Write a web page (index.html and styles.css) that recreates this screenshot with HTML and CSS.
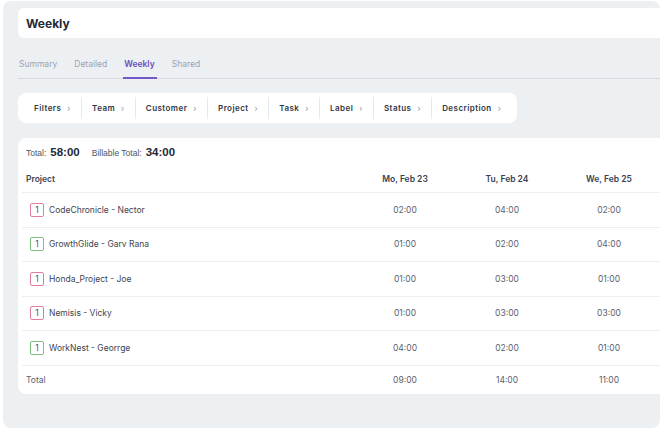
FILE: index.html
```html
<!DOCTYPE html>
<html lang="en">
<head>
  <meta charset="UTF-8">
  <meta name="viewport" content="width=device-width, initial-scale=1.0">
  <title>Weekly Report</title>
  <link rel="stylesheet" href="styles.css">
</head>
<body>
  <div class="panel">
    <div class="title-card">Weekly</div>

    <div class="tabs">
      <span class="tab">Summary</span>
      <span class="tab">Detailed</span>
      <span class="tab active">Weekly</span>
      <span class="tab">Shared</span>
    </div>

    <div class="filters">
      <span class="filter">Filters <i>›</i></span>
      <span class="filter">Team <i>›</i></span>
      <span class="filter">Customer <i>›</i></span>
      <span class="filter">Project <i>›</i></span>
      <span class="filter">Task <i>›</i></span>
      <span class="filter">Label <i>›</i></span>
      <span class="filter">Status <i>›</i></span>
      <span class="filter">Description <i>›</i></span>
    </div>

    <div class="report">
      <div class="totals">
        <span class="total-label">Total:</span>
        <span class="total-value">58:00</span>
        <span class="total-label billable">Billable Total:</span>
        <span class="total-value">34:00</span>
      </div>

      <div class="grid">
        <div class="row head">
          <div class="cell name">Project</div>
          <div class="cell">Mo, Feb 23</div>
          <div class="cell">Tu, Feb 24</div>
          <div class="cell">We, Feb 25</div>
        </div>
        <div class="row">
          <div class="cell name"><span class="badge pink">1</span>CodeChronicle - Nector</div>
          <div class="cell">02:00</div>
          <div class="cell">04:00</div>
          <div class="cell">02:00</div>
        </div>
        <div class="row">
          <div class="cell name"><span class="badge green">1</span>GrowthGlide - Garv Rana</div>
          <div class="cell">01:00</div>
          <div class="cell">02:00</div>
          <div class="cell">04:00</div>
        </div>
        <div class="row">
          <div class="cell name"><span class="badge pink">1</span>Honda_Project - Joe</div>
          <div class="cell">01:00</div>
          <div class="cell">03:00</div>
          <div class="cell">01:00</div>
        </div>
        <div class="row">
          <div class="cell name"><span class="badge pink">1</span>Nemisis - Vicky</div>
          <div class="cell">01:00</div>
          <div class="cell">03:00</div>
          <div class="cell">03:00</div>
        </div>
        <div class="row">
          <div class="cell name"><span class="badge green">1</span>WorkNest - Georrge</div>
          <div class="cell">04:00</div>
          <div class="cell">02:00</div>
          <div class="cell">01:00</div>
        </div>
        <div class="row foot">
          <div class="cell name">Total</div>
          <div class="cell">09:00</div>
          <div class="cell">14:00</div>
          <div class="cell">11:00</div>
        </div>
      </div>
    </div>
  </div>
</body>
</html>
```

FILE: styles.css
```css
* {
  box-sizing: border-box;
}

body {
  margin: 0;
  background-color: #ffffff;
  font-family: 'Inter', 'Noto Sans', sans-serif;
  color: #374151;
}

.panel {
  width: 657px;
  height: 427px;
  margin: 1px 0 0 3px;
  padding: 7px 0 0 15px;
  background-color: #edf0f3;
  border-radius: 8px;
  overflow: hidden;
}

.title-card {
  height: 30px;
  margin-right: -20px;
  padding-left: 8px;
  display: flex;
  align-items: center;
  background-color: #ffffff;
  border-radius: 6px;
  font-size: 12px;
  font-weight: 700;
  color: #1f2937;
}

.tabs {
  display: flex;
  gap: 14px;
  margin-top: 21px;
  margin-right: -20px;
  border-bottom: 1.5px solid #d5d9df;
}

.tab {
  padding: 0 2px 8px 1px;
  font-size: 8.5px;
  color: #9ca3af;
  margin-bottom: -1.5px;
  border-bottom: 2px solid transparent;
}

.tab.active {
  color: #6a4cc0;
  font-weight: 600;
  border-bottom-color: #7356c8;
}

.filters {
  display: inline-flex;
  align-items: center;
  height: 30px;
  margin-top: 14px;
  padding-left: 6px;
  background-color: #ffffff;
  border-radius: 8px;
}

.filter {
  display: flex;
  align-items: center;
  height: 22px;
  padding: 0 10.1px;
  font-size: 8px;
  font-weight: 600;
  letter-spacing: 0.45px;
  color: #2f3744;
  border-left: 1px solid #e6e8ec;
}

.filter:first-child {
  border-left: none;
}

.filter i {
  font-style: normal;
  font-weight: 400;
  color: #8b929c;
  margin-left: 6px;
  font-size: 8px;
}

.filters .filter:last-child {
  padding-right: 16px;
}

.report {
  margin-top: 15px;
  margin-right: -30px;
  height: 256px;
  padding: 8px 0 0 4px;
  background-color: #ffffff;
  border-radius: 8px;
}

.totals {
  display: flex;
  align-items: baseline;
  height: 16px;
  padding-left: 4px;
  font-family: 'Liberation Sans', Arial, sans-serif;
}

.total-label {
  font-size: 8.5px;
  color: #4b5563;
  margin-right: 4px;
}

.total-label.billable {
  margin-left: 12px;
}

.total-value {
  font-size: 11.5px;
  font-weight: 700;
  color: #1f2937;
}

.row {
  display: grid;
  grid-template-columns: 332px 102px 102px 102px 1fr;
  align-items: center;
  height: 34.5px;
  border-bottom: 1px solid #eceef1;
  font-size: 8.5px;
  color: #5b6270;
}

.row.head {
  height: 27.5px;
  margin-top: 4px;
  font-weight: 600;
  color: #374151;
}

.row.foot {
  height: 29px;
  border-bottom: none;
}

.cell {
  text-align: center;
}

.cell.name {
  display: flex;
  align-items: center;
  text-align: left;
  padding-left: 4px;
  color: #3d4451;
}

.row.foot .cell.name {
  color: #5b6270;
}

.badge {
  display: inline-flex;
  align-items: center;
  justify-content: center;
  width: 14px;
  height: 14px;
  margin: 0 5px 0 4px;
  border: 1px solid;
  border-radius: 2px;
  font-size: 8.5px;
  color: #4b5563;
}

.badge.pink {
  border-color: #e07ea3;
}

.badge.green {
  border-color: #7dc281;
}
```
